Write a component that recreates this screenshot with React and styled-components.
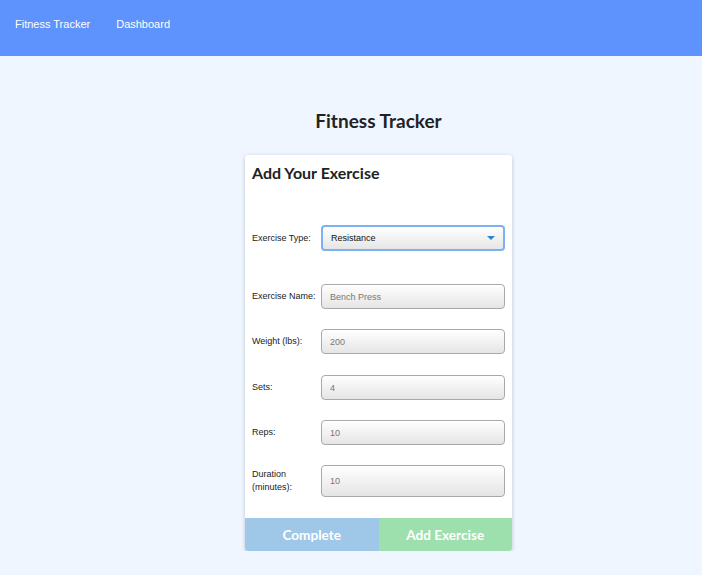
import styled, { createGlobalStyle } from "styled-components"

const GlobalStyle = createGlobalStyle`
body{
    margin: 0;
    background-color: #eff6ff;
    font-family: "Liberation Sans", Arial, sans-serif;
}
`

const fields = [
    { label: 'Exercise Name:', value: 'Bench Press', gap: 33 },
    { label: 'Weight (lbs):', value: '200', gap: 20 },
    { label: 'Sets:', value: '4', gap: 21 },
    { label: 'Reps:', value: '10', gap: 20 },
    { label: 'Duration (minutes):', value: '10', gap: 20, tall: true },
]

export default function App(){
    return (
        <>
            <GlobalStyle />
            <Navbar>
                <NavLink>Fitness Tracker</NavLink>
                <NavLink>Dashboard</NavLink>
            </Navbar>
            <Main>
                <Title>Fitness Tracker</Title>
                <Card>
                    <CardTitle>Add Your Exercise</CardTitle>
                    <Form>
                        <Row gap={41}>
                            <Label>Exercise Type:</Label>
                            <Select>
                                <span>Resistance</span>
                                <Caret />
                            </Select>
                        </Row>
                        {fields.map(field => (
                            <Row key={field.label} gap={field.gap}>
                                <Label>{field.label}</Label>
                                <Input tall={field.tall}>{field.value}</Input>
                            </Row>
                        ))}
                    </Form>
                    <Buttons>
                        <Button color="#9fc7e8">Complete</Button>
                        <Button color="#9ee0ad">Add Exercise</Button>
                    </Buttons>
                </Card>
            </Main>
        </>
    )
}

const Navbar = styled.div`
height: 56px;
background-color: #5e92fc;
display: flex;
align-items: center;
padding: 0 15px 9px;
box-sizing: border-box;
gap: 26px;
`

const NavLink = styled.span`
color: #fff;
font-size: 11px;
cursor: pointer;
`

const Main = styled.div`
display: flex;
flex-direction: column;
align-items: center;
padding-top: 50px;
padding-left: 55px;
`

const Title = styled.h1`
margin: 0;
font-family: Lato, sans-serif;
font-size: 19px;
font-weight: 700;
color: #222;
line-height: 29px;
`

const Card = styled.div`
margin-top: 20px;
width: 267px;
background-color: #fff;
border-radius: 3px;
box-shadow: 0 1px 4px rgba(0, 0, 0, 0.2);
overflow: hidden;
`

const CardTitle = styled.h2`
margin: 0;
padding: 7px 7px 0;
font-family: Lato, sans-serif;
font-size: 16px;
font-weight: 700;
color: #222;
line-height: 22px;
`

const Form = styled.div`
display: flex;
flex-direction: column;
padding: 0 7px 21px 7px;
`

const Row = styled.div`
display: flex;
align-items: center;
margin-top: ${props => props.gap}px;
`

const Label = styled.span`
width: 69px;
flex-shrink: 0;
font-size: 9px;
color: #222;
line-height: 13px;
padding-right: 4px;
box-sizing: border-box;
`

const Select = styled.div`
flex: 1;
height: 26px;
border: 2px solid #7db2f2;
border-radius: 4px;
background: linear-gradient(#fff, #e6e6e6);
display: flex;
align-items: center;
justify-content: space-between;
padding: 0 8px 0 8px;
box-sizing: border-box;
font-size: 9px;
color: #111;
`

const Caret = styled.span`
width: 0;
height: 0;
border-left: 4px solid transparent;
border-right: 4px solid transparent;
border-top: 4px solid #2a86d0;
`

const Input = styled.div`
flex: 1;
height: ${props => props.tall ? 32 : 25}px;
border: 1px solid #a9a9a9;
border-radius: 4px;
background: linear-gradient(#fff, #e5e5e5);
display: flex;
align-items: center;
padding-left: 8px;
box-sizing: border-box;
font-size: 9px;
color: #777;
`

const Buttons = styled.div`
display: flex;
`

const Button = styled.div`
flex: 1;
height: 33px;
background-color: ${props => props.color};
color: #fff;
font-family: Lato, sans-serif;
font-weight: 700;
font-size: 13.6px;
display: flex;
align-items: center;
justify-content: center;
cursor: pointer;
`
